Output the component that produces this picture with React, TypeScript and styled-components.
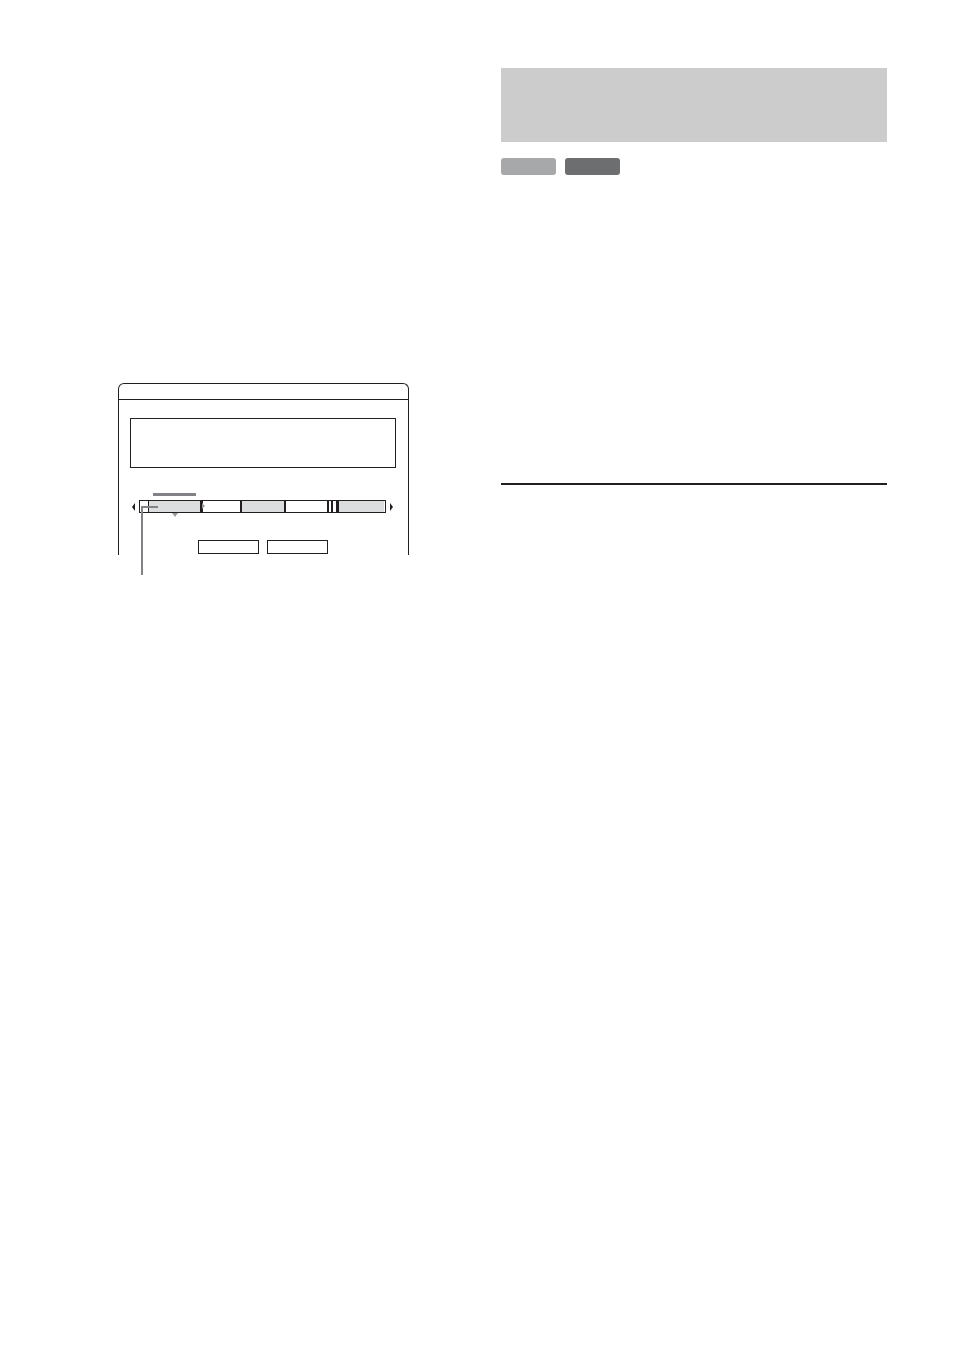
import React from "react";
import styled, { createGlobalStyle } from "styled-components";

const GlobalStyle = createGlobalStyle`
  html, body {
    margin: 0;
    padding: 0;
    background: #ffffff;
    font-family: "Liberation Sans", Arial, sans-serif;
  }
`;

const Page = styled.div`
  width: 954px;
  height: 1351px;
  display: flex;
  align-items: flex-start;
  padding-top: 68px;
  box-sizing: border-box;
`;

const LeftColumn = styled.div`
  margin-left: 118px;
  width: 291px;
  padding-top: 315px;
`;

const RightColumn = styled.div`
  margin-left: 92px;
  width: 386px;
  display: flex;
  flex-direction: column;
`;

const Screen = styled.div`
  position: relative;
  height: 172px;
  border: 1.5px solid #231f20;
  border-bottom: none;
  border-radius: 6px 6px 0 0;
  box-sizing: border-box;
`;

const TitleBar = styled.div`
  height: 15px;
  border-bottom: 1px solid #231f20;
`;

const InfoBox = styled.div`
  margin: 18px 12px 0 11px;
  height: 50px;
  border: 1px solid #231f20;
  box-sizing: border-box;
`;

const TimelineRow = styled.div`
  margin-top: 32px;
  display: flex;
  align-items: center;
  gap: 4px;
  padding-left: 12.5px;
`;

const Arrow = styled.span<{ $dir: "left" | "right" }>`
  width: 0;
  height: 0;
  border-top: 4px solid transparent;
  border-bottom: 4px solid transparent;
  ${(p) =>
    p.$dir === "left"
      ? "border-right: 3px solid #231f20;"
      : "border-left: 3px solid #231f20;"}
`;

const Track = styled.div`
  position: relative;
  display: flex;
  width: 247px;
  height: 13px;
  border: 1.5px solid #231f20;
  box-sizing: border-box;
`;

const Segment = styled.div<{ $w: number; $filled?: boolean }>`
  width: ${(p) => p.$w}px;
  flex-shrink: 0;
  height: 100%;
  background: ${(p) => (p.$filled ? "#dcddde" : "#ffffff")};
  border-left: 2px solid #231f20;
  box-sizing: border-box;
  &:first-child {
    border-left: none;
  }
`;

const Bars = styled.div`
  width: 10px;
  flex-shrink: 0;
  height: 100%;
  display: flex;
  justify-content: space-between;
  border-left: 2px solid #231f20;
  box-sizing: border-box;
  background: #ffffff;
  padding: 0 0 0 2px;
  & > span {
    width: 1.5px;
    background: #231f20;
  }
`;

const Selected = styled.div`
  position: absolute;
  left: 8.5px;
  top: -1.5px;
  width: 53px;
  height: 13px;
  background: #dcddde;
  border: 1.5px solid #231f20;
  box-sizing: border-box;
`;

const SelectedTip = styled.span<{ $side: "right" | "down" }>`
  position: absolute;
  width: 0;
  height: 0;
  ${(p) =>
    p.$side === "right"
      ? `right: -5px; top: 2px;
         border-top: 3px solid transparent;
         border-bottom: 3px solid transparent;
         border-left: 3.5px solid #9a9b9c;`
      : `left: 22.5px; bottom: -5.5px;
         border-left: 3px solid transparent;
         border-right: 3px solid transparent;
         border-top: 4px solid #9a9b9c;`}
`;

const TopMark = styled.div`
  position: absolute;
  left: 13.5px;
  top: -8.5px;
  width: 43px;
  height: 3.5px;
  background: #808285;
`;

const Leader = styled.div`
  position: absolute;
  left: 1px;
  top: 4.5px;
  width: 17px;
  height: 69px;
  border-left: 2px solid #808285;
  border-top: 2px solid #808285;
  box-sizing: border-box;
`;

const ButtonRow = styled.div`
  margin-top: 27px;
  display: flex;
  justify-content: center;
  gap: 8px;
  padding-right: 2px;
`;

const FrameButton = styled.div`
  width: 61px;
  height: 14px;
  border: 1px solid #231f20;
  box-sizing: border-box;
`;

const HeaderBand = styled.div`
  height: 74px;
  background: #cccccc;
`;

const BadgeRow = styled.div`
  margin-top: 16px;
  display: flex;
  gap: 9px;
`;

const Badge = styled.div<{ $dark?: boolean }>`
  width: 55px;
  height: 17px;
  border-radius: 3px;
  background: ${(p) => (p.$dark ? "#6d6e70" : "#a7a8aa")};
`;

const Rule = styled.div`
  margin-top: 308px;
  height: 1.5px;
  background: #231f20;
`;

const segments = [
  { w: 8.5, filled: false },
  { w: 53, filled: true },
  { w: 39, filled: false },
  { w: 44, filled: true },
  { w: 43, filled: false },
];

export default function App() {
  return (
    <>
      <GlobalStyle />
      <Page>
        <LeftColumn>
          <Screen>
            <TitleBar />
            <InfoBox />
            <TimelineRow>
              <Arrow $dir="left" />
              <Track>
                {segments.map((s, i) => (
                  <Segment key={i} $w={s.w} $filled={s.filled} />
                ))}
                <Bars>
                  <span />
                  <span />
                </Bars>
                <Segment $w={46.5} $filled />
                <TopMark />
                <Selected>
                  <SelectedTip $side="right" />
                  <SelectedTip $side="down" />
                </Selected>
                <Leader />
              </Track>
              <Arrow $dir="right" />
            </TimelineRow>
            <ButtonRow>
              <FrameButton />
              <FrameButton />
            </ButtonRow>
          </Screen>
        </LeftColumn>
        <RightColumn>
          <HeaderBand />
          <BadgeRow>
            <Badge />
            <Badge $dark />
          </BadgeRow>
          <Rule />
        </RightColumn>
      </Page>
    </>
  );
}
